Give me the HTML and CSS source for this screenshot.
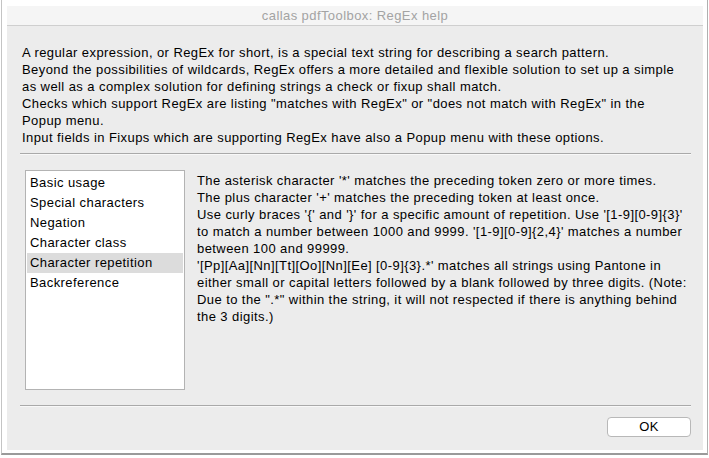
FILE: index.html
```html
<!DOCTYPE html>
<html>
<head>
<meta charset="utf-8">
<title>callas pdfToolbox: RegEx help</title>
<link rel="stylesheet" href="styles.css">
</head>
<body>
<div class="frame">
  <div class="window">
    <div class="titlebar">callas pdfToolbox: RegEx help</div>
    <div class="content">
      <div class="intro">
        <div>A regular expression, or RegEx for short, is a special text string for describing a search pattern.</div>
        <div>Beyond the possibilities of wildcards, RegEx offers a more detailed and flexible solution to set up a simple<br>as well as a complex solution for defining strings a check or fixup shall match.</div>
        <div>Checks which support RegEx are listing "matches with RegEx" or "does not match with RegEx" in the<br>Popup menu.</div>
        <div>Input fields in Fixups which are supporting RegEx have also a Popup menu with these options.</div>
      </div>
      <div class="separator"></div>
      <div class="main">
        <ul class="topics">
          <li>Basic usage</li>
          <li>Special characters</li>
          <li>Negation</li>
          <li>Character class</li>
          <li class="selected">Character repetition</li>
          <li>Backreference</li>
        </ul>
        <div class="detail">
          <div>The asterisk character '*' matches the preceding token zero or more times.</div>
          <div>The plus character '+' matches the preceding token at least once.</div>
          <div>Use curly braces '{' and '}' for a specific amount of repetition. Use '[1-9][0-9]{3}'<br>to match a number between 1000 and 9999. '[1-9][0-9]{2,4}' matches a number<br>between 100 and 99999.</div>
          <div>'[Pp][Aa][Nn][Tt][Oo][Nn][Ee] [0-9]{3}.*' matches all strings using Pantone in<br>either small or capital letters followed by a blank followed by three digits. (Note:<br>Due to the ".*" within the string, it will not respected if there is anything behind<br>the 3 digits.)</div>
        </div>
      </div>
      <div class="separator bottom"></div>
      <div class="buttons">
        <button class="ok">OK</button>
      </div>
    </div>
  </div>
</div>
</body>
</html>
```
FILE: styles.css
```css
html, body {
  margin: 0;
  padding: 0;
  background: #ffffff;
}
body {
  font-family: "Liberation Sans", Arial, sans-serif;
  font-size: 13px;
  letter-spacing: 0.42px;
  color: #000;
}
.frame {
  margin-left: 1px;
  width: 698px;
  height: 444px;
  padding: 6px 2px 3px 5px;
  border-left: 1px solid #c4c4c4;
  border-right: 1px solid #b0b0b0;
  border-bottom: 2px solid #9a9a9a;
}
.window {
  width: 696px;
  height: 444px;
  display: flex;
  flex-direction: column;
  background: #ececec;
}
.titlebar {
  height: 19px;
  line-height: 19px;
  flex: none;
  background: #f5f5f5;
  border-bottom: 1px solid #cfcfcf;
  text-align: center;
  color: #a3a3a3;
  font-size: 13px;
}
.content {
  flex: 1;
  display: flex;
  flex-direction: column;
  padding: 18px 12px 12px 13px;
}
.intro {
  line-height: 17px;
  padding-left: 2px;
  white-space: nowrap;
}
.separator {
  height: 1px;
  background: #a9a9a9;
  border-bottom: 1px solid #f8f8f8;
  margin-top: 7px;
}
.main {
  display: flex;
  margin-top: 15px;
  gap: 12px;
  padding-left: 5px;
}
.topics {
  list-style: none;
  margin: 0;
  padding: 2px 1px 0 1px;
  width: 156px;
  height: 216px;
  flex: none;
  background: #fff;
  border: 1px solid #b3b3b3;
}
.topics li {
  height: 20px;
  line-height: 20px;
  padding-left: 3px;
  white-space: nowrap;
}
.topics li.selected {
  background: #dcdcdc;
}
.detail {
  line-height: 17px;
  margin-top: 2px;
  flex: 1;
  white-space: nowrap;
}
.separator.bottom {
  margin-top: 15px;
}
.buttons {
  display: flex;
  justify-content: flex-end;
  margin-top: 10px;
}
.ok {
  width: 84px;
  height: 20px;
  padding: 0;
  background: #fff;
  border: 1px solid #b8b8b8;
  border-radius: 4px;
  font-family: "Liberation Sans", Arial, sans-serif;
  font-size: 13px;
  letter-spacing: 0.42px;
  color: #000;
  line-height: 18px;
}
```
